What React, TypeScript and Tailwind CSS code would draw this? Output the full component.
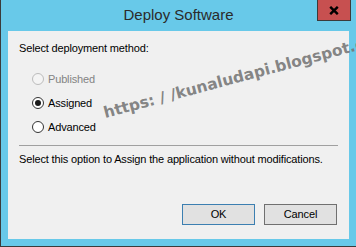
const font = { fontFamily: '"Liberation Sans", Arial, sans-serif' };

type RadioProps = { label: string; checked?: boolean; disabled?: boolean };

const Radio = ({ label, checked, disabled }: RadioProps) => (
  <div className="flex items-center h-[24px] pl-[24px]">
    <span
      className={
        disabled
          ? 'w-[12px] h-[12px] rounded-full border border-[#bcbcbc] bg-[#f4f4f4] flex items-center justify-center'
          : 'w-[12px] h-[12px] rounded-full border border-[#333333] bg-white flex items-center justify-center'
      }
    >
      {checked && <span className="w-[6px] h-[6px] rounded-full bg-[#1a1a1a]" />}
    </span>
    <span className={disabled ? 'ml-[4px] text-[#838383]' : 'ml-[4px] text-black'}>{label}</span>
  </div>
);

export default function App() {
  return (
    <div
      className="relative w-[356px] h-[247px] bg-[#68c9e9] border-l border-b border-[#3b3b3b] flex flex-col overflow-hidden text-[11px] tracking-[-0.15px]"
      style={font}
    >
      {/* title bar */}
      <div className="relative h-[31px] flex items-center justify-center">
        <span className="text-[15px] tracking-normal text-[#2b2b2b] -mt-[1px]">Deploy Software</span>
        <div className="absolute right-[5px] top-0 w-[34px] h-[21px] bg-[#c75050] border border-[#3b3b3b] border-t-0 flex items-center justify-center">
          <svg width="10" height="9" viewBox="0 0 10 9">
            <path d="M1.2 0.8 L8.8 8.2 M8.8 0.8 L1.2 8.2" stroke="#000" strokeWidth="2.4" />
          </svg>
        </div>
      </div>

      {/* client area */}
      <div className="ml-[7px] w-[341px] h-[208px] bg-[#f0f0f0] flex flex-col">
        <div className="mt-[9px] pl-[11px] h-[16px] leading-[16px] text-black">Select deployment method:</div>
        <div className="mt-[11px] flex flex-col">
          <Radio label="Published" disabled />
          <Radio label="Assigned" checked />
          <Radio label="Advanced" />
        </div>
        <div className="mt-[6px] ml-[11px] w-[319px] h-px bg-[#a0a0a0]" />
        <div className="mt-[5px] pl-[11px] h-[16px] leading-[16px] text-black">
          Select this option to Assign the application without modifications.
        </div>
        <div className="mt-[37px] flex justify-end gap-[9px] pr-[12px]">
          <button className="w-[73px] h-[21px] bg-[#e1e1e1] border border-[#3c7fb1] text-black">OK</button>
          <button className="w-[73px] h-[21px] bg-[#e1e1e1] border border-[#707070] text-black">Cancel</button>
        </div>
      </div>

      {/* watermark */}
      <span
        className="absolute left-[105px] top-[106px] h-[15px] leading-none whitespace-nowrap text-[15.5px] tracking-normal font-bold text-[#767676]/90 origin-bottom-left -rotate-[15deg]"
        style={{ fontFamily: '"DejaVu Sans", Verdana, sans-serif' }}
      >
        https: / /kunaludapi.blogspot.com
      </span>
    </div>
  );
}
